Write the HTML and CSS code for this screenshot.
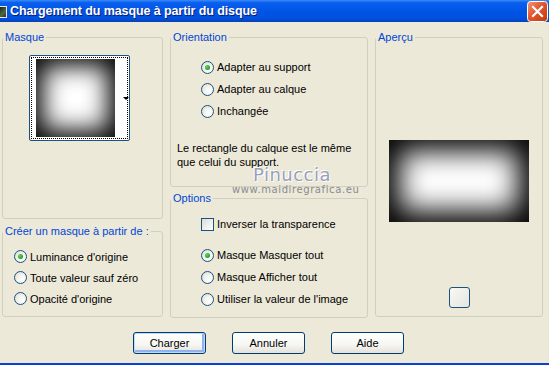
FILE: index.html
```html
<!DOCTYPE html>
<html lang="fr">
<head>
  <meta charset="UTF-8" />
  <title>Chargement du masque à partir du disque</title>
  <link rel="stylesheet" href="styles.css">
</head>
<body>
  <div class="window">
    <div class="titlebar">
      <span class="app-icon"></span>
      <span class="title">Chargement du masque à partir du disque</span>
      <span class="close">
        <svg width="21" height="21" viewBox="0 0 21 21">
          <defs>
            <linearGradient id="red" x1="0" y1="0" x2="1" y2="1">
              <stop offset="0" stop-color="#ef9a7c"/>
              <stop offset="0.45" stop-color="#e2562e"/>
              <stop offset="1" stop-color="#c1380c"/>
            </linearGradient>
          </defs>
          <rect x="0.5" y="0.5" width="20" height="20" rx="3" fill="url(#red)" stroke="#fff"/>
          <path d="M6 6 L15 15 M15 6 L6 15" stroke="#fff" stroke-width="2.2" stroke-linecap="square"/>
        </svg>
      </span>
    </div>

    <div class="content">
      <div class="panes">
        <!-- left column -->
        <div class="col">
          <fieldset class="group group-masque">
            <legend>Masque</legend>
            <div class="mask-picker">
              <div class="mask-thumb"></div>
              <span class="mask-arrow"></span>
            </div>
          </fieldset>

          <fieldset class="group group-create">
            <legend>Créer un masque à partir de :</legend>
            <div class="options-list">
              <label class="opt"><span class="radio checked"></span>Luminance d'origine</label>
              <label class="opt"><span class="radio"></span>Toute valeur sauf zéro</label>
              <label class="opt"><span class="radio"></span>Opacité d'origine</label>
            </div>
          </fieldset>
        </div>

        <!-- middle column -->
        <div class="col">
          <fieldset class="group group-orient">
            <legend>Orientation</legend>
            <div class="options-list">
              <label class="opt"><span class="radio checked"></span>Adapter au support</label>
              <label class="opt"><span class="radio"></span>Adapter au calque</label>
              <label class="opt"><span class="radio"></span>Inchangée</label>
            </div>
            <p class="note">Le rectangle du calque est le même<br>que celui du support.</p>
          </fieldset>

          <fieldset class="group group-options">
            <legend>Options</legend>
            <label class="opt opt-check"><span class="checkbox"></span>Inverser la transparence</label>
            <div class="options-list list-after-check">
              <label class="opt"><span class="radio checked"></span>Masque Masquer tout</label>
              <label class="opt"><span class="radio"></span>Masque Afficher tout</label>
              <label class="opt"><span class="radio"></span>Utiliser la valeur de l'image</label>
            </div>
          </fieldset>
        </div>

        <!-- right column -->
        <fieldset class="group group-preview">
          <legend>Aperçu</legend>
          <div class="preview"></div>
          <button class="bg-btn"></button>
        </fieldset>
      </div>

      <div class="buttons">
        <button class="btn default">Charger</button>
        <button class="btn">Annuler</button>
        <button class="btn">Aide</button>
      </div>

      <div class="watermark">
        <div class="wm-name">Pinuccia</div>
        <div class="wm-url">www.maidiregrafica.eu</div>
      </div>
    </div>
  </div>
</body>
</html>
```

FILE: styles.css
```css
body {
  margin: 0;
  font-family: 'Liberation Sans', Arial, sans-serif;
  font-size: 11px;
  color: #000;
}

.window {
  width: 549px;
  height: 365px;
  background: #ece9d8;
  border-bottom: 2px solid #0842d8;
  box-sizing: border-box;
  position: relative;
  overflow: hidden;
}

.titlebar {
  height: 22px;
  display: flex;
  align-items: center;
  background: linear-gradient(#3a8cf5 0%, #0a5ff0 12%, #0055e5 50%, #0050dc 85%, #0840b8 100%);
}

.app-icon {
  width: 7px;
  height: 12px;
  margin-top: 1px;
  background: linear-gradient(135deg, #1a2a1a, #4d6a3d 60%, #2a2a2a);
  border: 1px solid #e8e8e8;
  border-left: none;
  box-sizing: border-box;
}

.title {
  margin-left: 3px;
  color: #fff;
  font-weight: bold;
  font-size: 12.5px;
  letter-spacing: -0.1px;
  text-shadow: 1px 1px #0a1e7a;
  flex: 1;
}

.close {
  display: flex;
  margin-right: 1px;
  margin-top: 1px;
}

.content {
  padding: 9px 0 0 2px;
}

.panes {
  display: flex;
  gap: 7px;
}

.col {
  display: flex;
  flex-direction: column;
}

.group {
  margin: 0;
  padding: 0;
  border: 1px solid #d0d0bf;
  border-radius: 3px;
  box-sizing: border-box;
  min-width: 0;
}

.group legend {
  color: #0046d5;
  padding: 0 2px;
  margin-left: 0;
  line-height: 13px;
}

.group-masque {
  width: 161px;
  height: 188px;
}

.group-create {
  width: 161px;
  height: 92px;
  margin-top: 6px;
}

.group-orient {
  width: 198px;
  height: 156px;
}

.group-options {
  width: 198px;
  height: 126px;
  margin-top: 5px;
}

.group-preview {
  width: 168px;
  height: 286px;
  display: flex;
  flex-direction: column;
  align-items: center;
}

/* mask picker */
.mask-picker {
  width: 101px;
  height: 86px;
  margin: 11px 0 0 26px;
  border: 1px solid #1c5180;
  border-radius: 2px;
  background: #fff;
  box-sizing: border-box;
  position: relative;
  display: flex;
  align-items: center;
  padding-left: 2px;
}

.mask-picker::before {
  content: "";
  position: absolute;
  left: 1px;
  top: 1px;
  right: 1px;
  bottom: 1px;
  border: 1px dotted #000;
}

.mask-thumb {
  width: 80px;
  height: 78px;
  margin-left: 4px;
  background: #fff;
  box-shadow: inset 0 0 24px 7px #000;
}

.mask-arrow {
  margin-left: 8px;
  border-left: 3px solid transparent;
  border-right: 3px solid transparent;
  border-top: 3px solid #000;
}

/* radios and checkboxes */
.options-list {
  display: flex;
  flex-direction: column;
}

.opt {
  display: flex;
  align-items: center;
  gap: 3px;
  height: 22px;
}

.radio {
  width: 13px;
  height: 13px;
  border: 1px solid #1c5180;
  border-radius: 50%;
  box-sizing: border-box;
  background: radial-gradient(circle at 65% 65%, #fff 0%, #f4f4f0 40%, #d8d8d0 100%);
  display: flex;
  align-items: center;
  justify-content: center;
}

.radio.checked::after {
  content: "";
  width: 5px;
  height: 5px;
  border-radius: 50%;
  background: radial-gradient(circle at 35% 35%, #5ed65e, #21a121 70%);
}

.checkbox {
  width: 13px;
  height: 13px;
  border: 1px solid #1c5180;
  box-sizing: border-box;
  background: linear-gradient(135deg, #dcdcd7, #fff);
}

.group-create .options-list {
  margin: 8px 0 0 11px;
}

.group-create .opt {
  height: 21px;
}

.group-orient .options-list {
  margin: 12px 0 0 30px;
}

.note {
  margin: 19px 0 0 6px;
  line-height: 14px;
}

.opt-check {
  margin: 8px 0 0 30px;
}

.list-after-check {
  margin: 9px 0 0 30px;
}

/* preview */
.preview {
  width: 140px;
  height: 82px;
  margin-top: 96px;
  background: #fff;
  box-shadow: inset 0 0 28px 11px #000;
}

.bg-btn {
  width: 21px;
  height: 21px;
  margin-top: 65px;
  padding: 0;
  border: 1px solid #1c5180;
  border-radius: 3px;
  background: linear-gradient(135deg, #f8f8f4, #e6e6e0);
}

/* dialog buttons */
.buttons {
  display: flex;
  gap: 26px;
  margin: 14px 0 0 131px;
}

.btn {
  width: 73px;
  height: 22px;
  padding: 0;
  font-family: 'Liberation Sans', Arial, sans-serif;
  font-size: 11px;
  color: #000;
  border: 1px solid #003c74;
  border-radius: 3px;
  background: linear-gradient(#fff 0%, #f6f6f2 60%, #e3e1d8 100%);
}

.btn.default {
  box-shadow: inset 0 0 0 1px #c3d9f8, inset -1px -1px 0 2px #92b2ec;
}

/* watermark over the dialog */
.watermark {
  position: absolute;
  left: 232px;
  top: 165px;
  width: 120px;
  text-align: center;
  pointer-events: none;
}

.wm-name {
  font-family: 'DejaVu Sans', sans-serif;
  font-size: 18px;
  color: #9aa0b8;
  letter-spacing: 0.5px;
  text-shadow: 1px 1px 0 #fff, -1px -1px 0 #fff;
  line-height: 19px;
}

.wm-url {
  font-family: 'DejaVu Sans', sans-serif;
  font-size: 10px;
  color: #8a8a92;
  letter-spacing: 0.6px;
  line-height: 12px;
}
```
